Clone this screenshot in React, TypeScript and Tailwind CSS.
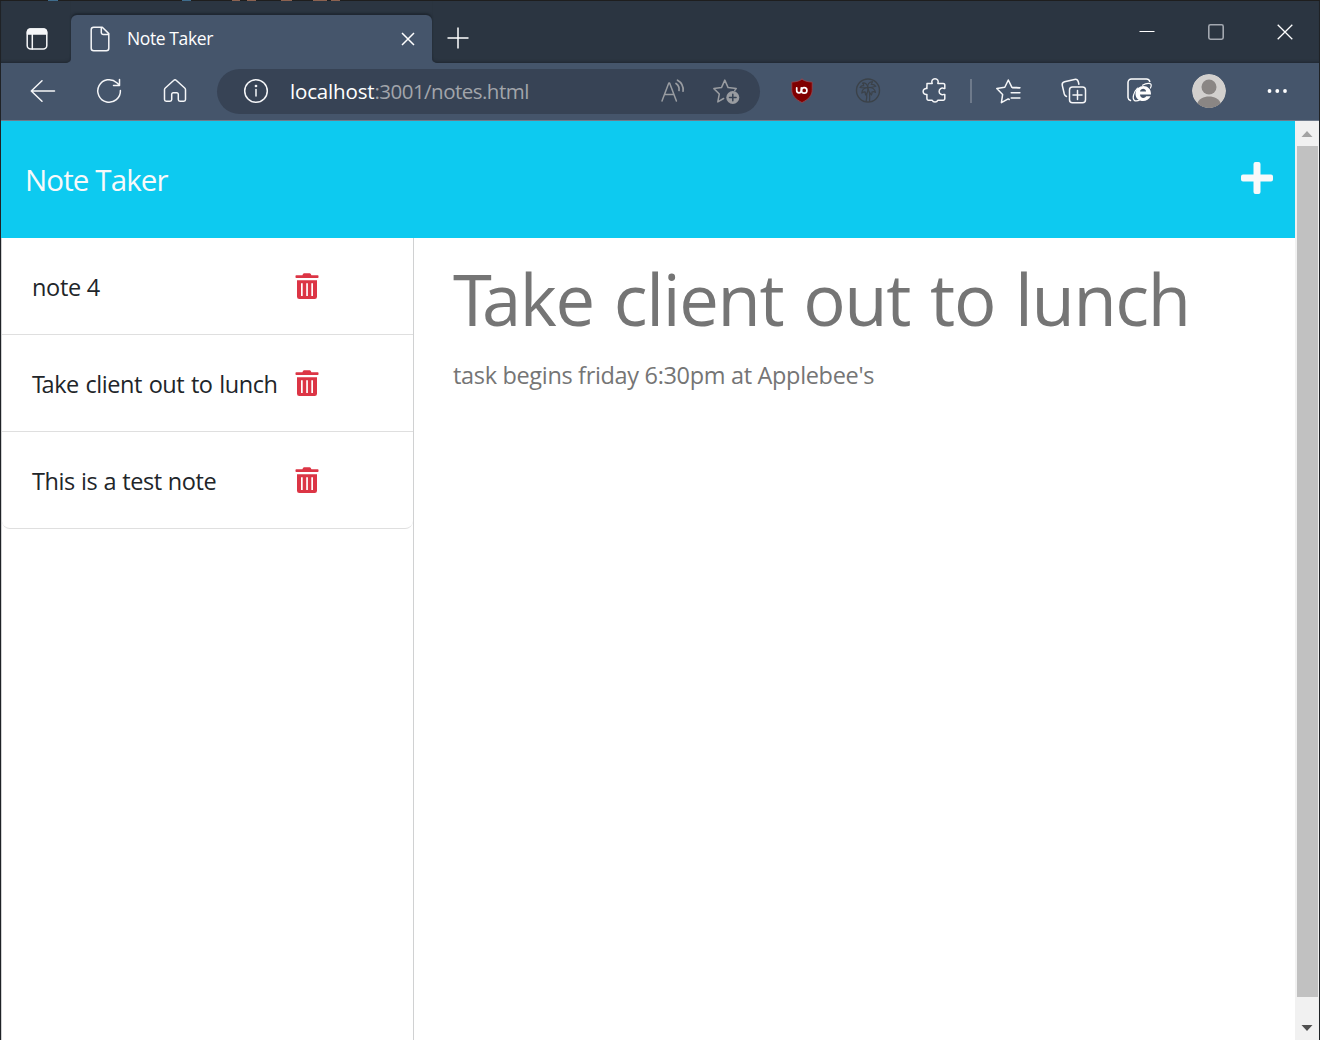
import React from "react";

type IconProps = { children: React.ReactNode; className?: string };

function Icon({ children, className = "text-[#f5f6f8]" }: IconProps) {
  return (
    <svg
      viewBox="0 0 28 28"
      className={`h-7 w-7 shrink-0 ${className}`}
      fill="none"
      stroke="currentColor"
      strokeWidth="1.5"
      strokeLinecap="round"
      strokeLinejoin="round"
    >
      {children}
    </svg>
  );
}

function ToolButton({ children }: { children: React.ReactNode }) {
  return <button className="flex h-14 w-[66px] shrink-0 items-center justify-center">{children}</button>;
}

const codeMarks = [
  { id: 1, cls: "ml-[48px] w-[10px] bg-[#3f6c8c]" },
  { id: 2, cls: "ml-[124px] w-[9px] bg-[#3f6c8c]" },
  { id: 3, cls: "ml-[41px] w-[8px] bg-[#8c6250]" },
  { id: 4, cls: "ml-[7px] w-[9px] bg-[#8c6250]" },
  { id: 5, cls: "ml-[25px] w-[11px] bg-[#8c6250]" },
  { id: 6, cls: "ml-[21px] w-[14px] bg-[#8c6250]" },
  { id: 7, cls: "ml-[4px] w-[9px] bg-[#8c6250]" },
];

function TabStrip() {
  return (
    <div className="flex h-[62px] shrink-0 bg-[#45556b]">
      <div className="flex w-[70px] shrink-0 items-start justify-center rounded-br-[5px] bg-[#2b3541] pl-0.5 pt-6 shadow-[inset_0_-3px_3px_-2px_#1f2731]">
        <Icon>
          <rect x="4.2" y="4" width="19.6" height="20" rx="3.5" />
          <path d="M4.5 9V7a3 3 0 0 1 3-3h13a3 3 0 0 1 3 3v2z" fill="currentColor" />
          <path d="M9.3 9v15" />
        </Icon>
      </div>
      <div className="w-[361px] shrink-0 bg-[#2b3541] pt-[14px]">
        <div className="relative flex h-12 items-center rounded-t-[6px] bg-[#45556b] shadow-[0_-2px_2px_#1f2731]">
          <Icon className="ml-[15px] text-[#f5f6f8]">
            <path d="M16.3 2.3H7.7a2.5 2.5 0 0 0-2.5 2.5v18.4a2.5 2.5 0 0 0 2.5 2.5h12.6a2.5 2.5 0 0 0 2.5-2.5V8.6zM15.3 2.5v5.1a2 2 0 0 0 2 2h5.3" />
          </Icon>
          <span className="-mt-0.5 ml-[13px] w-[274px] whitespace-nowrap text-[17.5px] leading-6 tracking-[-0.39px] text-white">
            Note Taker
          </span>
          <svg viewBox="0 0 14 14" className="h-3.5 w-3.5 shrink-0 text-white" stroke="currentColor" strokeWidth="1.5">
            <path d="M1 1l12 12M13 1L1 13" />
          </svg>
        </div>
      </div>
      <div className="flex flex-1 rounded-bl-[5px] bg-[#2b3541] shadow-[inset_0_-3px_3px_-2px_#1f2731]">
        <svg viewBox="0 0 22 22" className="ml-[15px] mt-[26px] h-[22px] w-[22px] shrink-0 text-white" stroke="currentColor" strokeWidth="1.5">
          <path d="M.5 11h21M11 .5v21" />
        </svg>
        <div className="ml-auto flex h-[62px] text-white">
          <div className="flex w-[69px] justify-center pl-px pt-[22px]">
            <svg viewBox="0 0 16 16" className="h-4 w-4" stroke="currentColor" strokeWidth="1">
              <path d="M.5 8.5h15" />
            </svg>
          </div>
          <div className="flex w-[69px] justify-center pt-[23px]">
            <svg viewBox="0 0 16 16" className="h-4 w-4 text-[#a3a8b0]" fill="none" stroke="currentColor" strokeWidth="1.6">
              <rect x=".8" y=".8" width="14.4" height="14.4" rx="1.6" />
            </svg>
          </div>
          <div className="flex w-[69px] justify-center pl-px pt-[23px]">
            <svg viewBox="0 0 16 16" className="h-4 w-4" stroke="currentColor" strokeWidth="1.3">
              <path d="M.7.7l14.6 14.6M15.3.7L.7 15.3" />
            </svg>
          </div>
        </div>
      </div>
    </div>
  );
}

function AddressBar() {
  return (
    <div className="ml-[9px] flex h-[45px] w-[543px] shrink-0 items-center rounded-full bg-[#374355]">
      <Icon className="ml-[25px] text-[#f5f6f8]">
        <circle cx="14" cy="14" r="11.3" />
        <path d="M14 12.5v6.5" />
        <circle cx="14" cy="9" r=".6" fill="currentColor" />
      </Icon>
      <div className="ml-5 w-[368px] whitespace-nowrap text-[20.5px] leading-7 text-[#a2a5ab]">
        <span className="tracking-[-0.16px] text-white">localhost</span>
        <span className="tracking-[-0.52px]">:3001/notes.html</span>
      </div>
      <Icon className="ml-px text-[#999ca1]">
        <path d="M3 24l6.8-18h.8l6.8 18M5.6 17.5h9.2" />
        <path d="M17 6.5a7 7 0 0 1 3 7M18.5 3.2c4 2.200 6 6 5.600 11" strokeWidth="1.7" />
      </Icon>
      <Icon className="ml-[26px] text-[#999ca1]">
        <path d="M10.600 21.500l-5.800 3.400L6.300 17 .9 11.600l7.600-1 3.300-7.500 3.300 7.500 8.100 1-1.400 1.800" />
        <circle cx="19.800" cy="20.500" r="6.500" fill="currentColor" stroke="none" />
        <path d="M19.800 17.200v6.600M16.500 20.500h6.600" stroke="#374355" />
      </Icon>
    </div>
  );
}

function ShieldIcon() {
  return (
    <Icon className="text-white">
      <path d="M14 2.200c3.300 2.400 6.800 2.700 10.200 2.900v7.600c0 6.300-4 9.600-10.200 12.900C7.800 22.300 3.800 19 3.800 12.700V5.100C7.200 4.900 10.700 4.600 14 2.200z" fill="#800000" stroke="#964852" strokeWidth=".8" />
      <path d="M8.700 10.800v2.800a2.300 2.300 0 0 0 4.600 0v-2.800" strokeWidth="1.700" />
      <circle cx="16.200" cy="13.400" r="2.700" strokeWidth="1.700" />
    </Icon>
  );
}

function PalmIcon() {
  return (
    <Icon className="text-[#3b4249]">
      <circle cx="14" cy="13.500" r="11.500" strokeWidth="1.400" />
      <g strokeWidth="1.200">
        <path d="M13.800 10.500c-.6-3-2.400-4.800-5.300-4.500 1 1 1.300 1.700 1.200 2.600-1.500-.3-2.800.3-3.700 1.900 2.700.4 5.200.3 7.800 0z" />
        <path d="M13.800 10.500c-3.300.2-5.800 2.200-6 5.600 1.300-1 2.400-1.300 3.600-1.100-.3 1-.2 2 .3 3 1.800-2 2.600-4.500 2.100-7.500z" />
        <path d="M13.800 10.500c-.4-3.200 1.500-5.400 4.700-6-.2 1.300-.6 2.200-1.300 2.900 1.900-.3 3.400.2 4.600 1.900-2.900.9-5.400 1.300-8 1.200z" />
        <path d="M13.800 10.500c3.800-.2 7 1.200 7.700 4.800-1.300-.7-2.500-.8-3.600-.3.300 1 .2 2-.5 3-2-1.900-3.200-4.300-3.600-7.500z" />
        <path d="M12.700 17c.2 2.500 0 5-.6 7.500M15.400 15.500c.4 3 .4 6 .2 9" />
      </g>
    </Icon>
  );
}

function IeIcon() {
  return (
    <Icon className="text-white">
      <path d="M23.800 4.500A3.500 3.500 0 0 0 20.500 2H5.500A3.500 3.500 0 0 0 2 5.500v15A3.500 3.500 0 0 0 4.500 23.500" />
      <path d="M25 17.600H14c.1 4.200 5 4.200 6.100 1.700h4.500c-3 7.300-15.100 6.100-15.100-2.500C9.500 6.500 25.600 5.700 25 17.600zM14 14.500h6.100c-.3-3.600-5.600-3.600-6.100 0z" fill="currentColor" fillRule="evenodd" stroke="none" />
      <path d="M16.500 8.200c4-2.400 8.700-2.700 8.700 0 0 1-.3 1.900-.8 2.800M11.500 11.200c-4.200 4.300-5.300 10.100-3.300 12 1.300 1.200 3.800.7 6.300-.8" strokeWidth="1.200" />
    </Icon>
  );
}

function Toolbar() {
  return (
    <div className="flex h-[57px] shrink-0 items-center bg-[#45556b] pb-px pl-[9px]">
      <ToolButton>
        <Icon>
          <path d="M25.500 14H2.300M13 3.800L2.300 14 13 24.200" />
        </Icon>
      </ToolButton>
      <ToolButton>
        <Icon>
          <path d="M25.400 13.500A11.300 11.300 0 1 1 21.800 5.700L24.300 8M24.500 2.500v6h-6" />
        </Icon>
      </ToolButton>
      <ToolButton>
        <Icon>
          <path d="M12.600 3.500L4.300 11a2.500 2.500 0 0 0-.8 1.800v9.700A1.700 1.700 0 0 0 5.200 24.200H9a1.700 1.700 0 0 0 1.700-1.700v-5.200A1.500 1.500 0 0 1 12.200 15.800h3.600a1.500 1.500 0 0 1 1.500 1.500v5.200a1.700 1.700 0 0 0 1.700 1.700h3.800a1.700 1.700 0 0 0 1.700-1.700v-9.700a2.500 2.500 0 0 0-.8-1.800l-8.300-7.500a2 2 0 0 0-2.800 0z" />
        </Icon>
      </ToolButton>
      <AddressBar />
      <div className="ml-[9px] flex">
        <ToolButton><ShieldIcon /></ToolButton>
        <ToolButton><PalmIcon /></ToolButton>
        <ToolButton>
          <Icon>
            <path d="M7 6.400h5.200a3.200 3.200 0 1 1 5.600 0h5.400a1.600 1.600 0 0 1 1.600 1.600v3.400h-1a3.300 3.300 0 1 0 0 6h1v4.200a1.600 1.600 0 0 1-1.600 1.600h-5.400a3 3 0 0 1-5.600 0H8.500A1.600 1.600 0 0 1 6.900 21.600v-4.200a3 3 0 1 1 0-5.800z" />
          </Icon>
        </ToolButton>
      </div>
      <div className="ml-[3px] mr-[3px] h-6 w-0.5 shrink-0 bg-[#6e7a8b]" />
      <ToolButton>
        <Icon>
          <path d="M15.200 22.500l-1-.6-6.800 3.700 1.200-8L2.800 11.500l8-1.200L14.300 3l3.600 7.300 7.600.4" />
          <path d="M18.500 10.700h7.400M17.200 15.800h8.700M17.200 21h8.700" />
        </Icon>
      </ToolButton>
      <ToolButton>
        <Icon>
          <rect x="9.500" y="10" width="16" height="15.800" rx="3" />
          <path d="M17.500 13.500v9M13 18h9M6.500 19.500c-1-.5-1.800-1.200-2.200-2.500L2.300 8.500C1.800 6.500 2.500 5.300 4.500 4.700L14.500 2.400c2-.4 3.300.5 3.800 2.300l.6 2.500" />
        </Icon>
      </ToolButton>
      <ToolButton><IeIcon /></ToolButton>
      <div className="flex w-[71px] justify-center">
        <svg viewBox="0 0 34 34" className="h-[34px] w-[34px] overflow-hidden rounded-full">
          <circle cx="17" cy="17" r="17" fill="#d2d0ce" />
          <circle cx="17" cy="13" r="7.500" fill="#8a8684" />
          <path d="M5 30c2-5.500 6.500-7.500 12-7.500S27 24.500 29 30c-6 5.400-18 5.400-24 0z" fill="#8a8684" />
        </svg>
      </div>
      <ToolButton>
        <Icon className="text-white">
          <g fill="currentColor" stroke="none">
            <circle cx="6.500" cy="14" r="1.900" />
            <circle cx="14.300" cy="14" r="1.900" />
            <circle cx="22" cy="14" r="1.900" />
          </g>
        </Icon>
      </ToolButton>
    </div>
  );
}

function TrashIcon() {
  return (
    <svg viewBox="0 0 24 27" className="mt-px h-[27px] w-6 shrink-0 text-[#dc3545]" fill="currentColor">
      <path d="M1.200 2.200H7.400L8 .9A1.300 1.300 0 0 1 9.200 .2h5.400A1.300 1.300 0 0 1 15.800.9l.6 1.300h6.400a.7.7 0 0 1 .7.7v1.400a.7.7 0 0 1-.7.7H1.200a.7.7 0 0 1-.7-.7V2.900a.7.7 0 0 1 .7-.7z" />
      <path fillRule="evenodd" d="M2 7.200h20v16.600a2.300 2.300 0 0 1-2.300 2.300H4.300A2.300 2.300 0 0 1 2 23.800zM6 10.300v12.600h1.700V10.300zM11.200 10.300v12.600h1.700V10.300zM16.300 10.300v12.600H18V10.300z" />
    </svg>
  );
}

const notes = [
  { title: "note 4", row: "border-b", text: "tracking-[-0.3px]" },
  {
    title: "Take client out to lunch",
    row: "border-b",
    text: "tracking-[-0.42px] [word-spacing:0.9px] first-letter:tracking-[-3.4px]",
  },
  { title: "This is a test note", row: "rounded-b-[8px] border-b", text: "tracking-[-0.4px] [word-spacing:0.4px]" },
];

function NoteList() {
  return (
    <div className="w-[413px] shrink-0 border-x border-[#d0d1d2]">
      <ul>
        {notes.map((note) => (
          <li key={note.title} className={`flex h-[97px] items-center border-[#dfdfdf] pl-[30px] text-[23.5px] text-[#212529] ${note.row}`}>
            <span className={`mt-0.5 w-[263px] whitespace-nowrap leading-9 ${note.text}`}>{note.title}</span>
            <TrashIcon />
          </li>
        ))}
      </ul>
    </div>
  );
}

function Scrollbar() {
  return (
    <div className="flex w-6 shrink-0 flex-col items-center bg-[#f1f1f1]">
      <svg viewBox="0 0 12 6" className="mt-2.5 h-1.5 w-3" fill="#a3a3a3">
        <path d="M6 0l5.500 6H.5z" />
      </svg>
      <div className="mt-[9px] h-[851px] w-[21px] bg-[#c1c1c1]" />
      <svg viewBox="0 0 12 6" className="mt-7 h-1.5 w-3" fill="#505050">
        <path d="M6 6L.5 0h11z" />
      </svg>
    </div>
  );
}

export default function App() {
  return (
    <div className="flex h-[1040px] w-[1320px] flex-col overflow-hidden bg-[#1e1e1e] font-['Open_Sans','Noto_Sans',sans-serif]">
      <div className="flex h-px shrink-0">
        {codeMarks.map((m) => (
          <span key={m.id} className={`h-px ${m.cls}`} />
        ))}
      </div>
      <div className="flex min-h-0 flex-1 flex-col border-x border-[#1f2226]">
        <TabStrip />
        <Toolbar />
        <div className="h-px shrink-0 bg-[#6f7b8c]" />
        <div className="flex min-h-0 flex-1 bg-white">
          <div className="flex min-w-0 flex-1 flex-col">
            <header className="flex h-[117px] shrink-0 items-center justify-between bg-[#0dcaf0] pl-6 pr-[22px] text-[#f8f9fa]">
              <h1 className="mt-0.5 whitespace-nowrap text-[29.5px] tracking-[-0.88px]">Note Taker</h1>
              <svg viewBox="0 0 32 32" className="mb-1 h-8 w-8" fill="currentColor">
                <path d="M14.500 0h3a2 2 0 0 1 2 2v10.500H30a2 2 0 0 1 2 2v3a2 2 0 0 1-2 2H19.500V30a2 2 0 0 1-2 2h-3a2 2 0 0 1-2-2V19.500H2a2 2 0 0 1-2-2v-3a2 2 0 0 1 2-2h10.500V2a2 2 0 0 1 2-2z" />
              </svg>
            </header>
            <div className="flex min-h-0 flex-1">
              <NoteList />
              <main className="flex flex-col whitespace-nowrap pl-[39px] pt-[13px] text-[#757575]">
                <h2 className="text-[70.6px] leading-[96px] tracking-[-1.35px] [word-spacing:3px] first-letter:tracking-[-10px]">
                  Take client out to lunch
                </h2>
                <p className="mt-[10px] text-[23.5px] leading-9 tracking-[-0.33px]">task begins friday 6:30pm at Applebee's</p>
              </main>
            </div>
          </div>
          <Scrollbar />
        </div>
      </div>
    </div>
  );
}
